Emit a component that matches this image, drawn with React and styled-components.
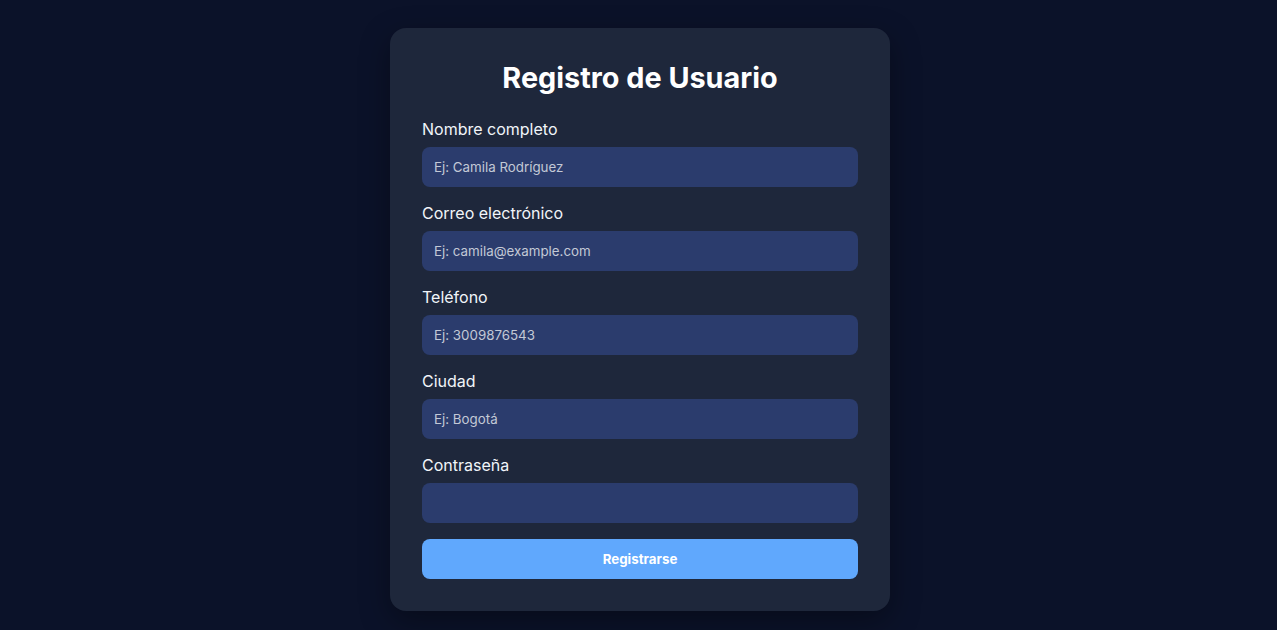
import styled, { createGlobalStyle } from 'styled-components';

const GlobalStyle = createGlobalStyle`
    * {
        box-sizing: border-box;
    }
    body {
        margin: 0;
        background: #0b1229;
        font-family: Inter, "Noto Sans", sans-serif;
    }
`;

const Pagina = styled.main`
    min-height: 100vh;
    display: flex;
    justify-content: center;
    padding: 28px 0 0 3px;
`;

const Tarjeta = styled.form`
    width: 500px;
    height: 583px;
    background: #1e273b;
    border-radius: 16px;
    padding: 32px;
    box-shadow: 0 10px 30px rgba(0, 0, 0, 0.35);
    display: flex;
    flex-direction: column;
`;

const Titulo = styled.h1`
    margin: 0 0 23px;
    text-align: center;
    color: #ffffff;
    font-size: 28.8px;
    font-weight: 700;
    line-height: 36px;
`;

const Campo = styled.div`
    display: flex;
    flex-direction: column;
    margin-bottom: 16px;
`;

const Etiqueta = styled.label`
    color: #f1f5f9;
    font-size: 16px;
    line-height: 20px;
    margin-bottom: 8px;
`;

const Entrada = styled.input`
    height: 40px;
    border: none;
    border-radius: 8px;
    background: #2b3c6d;
    padding: 0 12px;
    color: #ffffff;
    font-family: inherit;
    font-size: 13.333px;
    outline: none;

    &::placeholder {
        color: #c3c9d6;
    }
`;

const Boton = styled.button`
    height: 40px;
    border: none;
    border-radius: 8px;
    background: #60a8fd;
    color: #ffffff;
    font-family: inherit;
    font-size: 13.333px;
    font-weight: 700;
    cursor: pointer;
`;

const campos = [
    { id: 'nombre', etiqueta: 'Nombre completo', tipo: 'text', placeholder: 'Ej: Camila Rodríguez' },
    { id: 'correo', etiqueta: 'Correo electrónico', tipo: 'email', placeholder: 'Ej: camila@example.com' },
    { id: 'telefono', etiqueta: 'Teléfono', tipo: 'tel', placeholder: 'Ej: 3009876543' },
    { id: 'ciudad', etiqueta: 'Ciudad', tipo: 'text', placeholder: 'Ej: Bogotá' },
    { id: 'clave', etiqueta: 'Contraseña', tipo: 'password', placeholder: '' },
];

function App() {
    return (
        <>
            <GlobalStyle />
            <Pagina>
                <Tarjeta onSubmit={(e) => e.preventDefault()}>
                    <Titulo>Registro de Usuario</Titulo>
                    {campos.map((c) => (
                        <Campo key={c.id}>
                            <Etiqueta htmlFor={c.id}>{c.etiqueta}</Etiqueta>
                            <Entrada id={c.id} type={c.tipo} placeholder={c.placeholder} />
                        </Campo>
                    ))}
                    <Boton type="submit">Registrarse</Boton>
                </Tarjeta>
            </Pagina>
        </>
    );
}

export default App;
